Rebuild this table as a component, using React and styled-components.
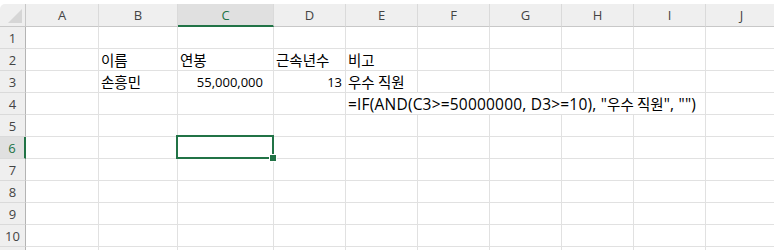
import React from "react";
import styled, { createGlobalStyle } from "styled-components";

const GlobalStyle = createGlobalStyle`
  html, body {
    margin: 0;
    padding: 0;
    background: #ffffff;
  }
  body {
    font-family: "Open Sans", "Noto Sans CJK KR", sans-serif;
  }
`;

const COLS = ["A", "B", "C", "D", "E", "F", "G", "H", "I", "J"];
const WIDTHS = [73, 79, 96, 72, 72, 72, 72, 72, 72, 72];
const ROWS = [1, 2, 3, 4, 5, 6, 7, 8, 9, 10, 11];

const green = "#217346";

const SELECTED = { col: "C", row: 6 };

// cell contents keyed by address (built at render time, after the styled parts exist)
const getData = () => ({
  B2: { text: <HangulText>이름</HangulText> },
  C2: { text: <HangulText>연봉</HangulText> },
  D2: { text: <HangulText>근속년수</HangulText> },
  E2: { text: <HangulText>비고</HangulText> },
  B3: { text: <HangulText>손흥민</HangulText> },
  C3: { text: "55,000,000", align: "right", pad: 10 },
  D3: { text: "13", align: "right" },
  E3: { text: <HangulText>우수 직원</HangulText> },
  E4: {
    span: 5,
    text: (
      <FormulaText>
        =IF(AND(C3&gt;=50000000, D3&gt;=10), "<HangulText>우수 직원</HangulText>", "")
      </FormulaText>
    ),
  },
});

const App = () => {
  const data = getData();
  return (
    <>
      <GlobalStyle />
      <Frame>
        <Sheet>
          <Corner>
            <CornerTriangle />
          </Corner>
          {COLS.map((c) => (
            <ColHeader key={c} $selected={c === SELECTED.col}>
              {c}
            </ColHeader>
          ))}
          {ROWS.map((r) => {
            const cells = [];
            let skip = 0;
            COLS.forEach((c) => {
              if (skip > 0) {
                skip -= 1;
                return;
              }
              const addr = c + r;
              const d = data[addr];
              const isSel = c === SELECTED.col && r === SELECTED.row;
              if (d && d.span) skip = d.span - 1;
              cells.push(
                <Cell
                  key={addr}
                  $span={d && d.span ? d.span : 1}
                  $align={d && d.align ? d.align : "left"}
                  $pad={d && d.pad ? d.pad : 3}
                  $active={isSel}
                >
                  {d ? d.text : null}
                  {isSel && (
                    <Selection>
                      <FillHandle />
                    </Selection>
                  )}
                </Cell>
              );
            });
            return (
              <React.Fragment key={r}>
                <RowHeader $selected={r === SELECTED.row}>{r}</RowHeader>
                {cells}
              </React.Fragment>
            );
          })}
        </Sheet>
      </Frame>
    </>
  );
};

const Frame = styled.div`
  width: 774px;
  height: 250px;
  overflow: hidden;
  padding-top: 4px;
  box-sizing: border-box;
  background: #ffffff;
`;

const Sheet = styled.div`
  display: grid;
  grid-template-columns: 26px ${WIDTHS.map((w) => w + "px").join(" ")};
  grid-template-rows: 23px repeat(${ROWS.length}, 22px);
  width: max-content;
`;

const Corner = styled.div`
  position: relative;
  background: #efefef;
  border-top-left-radius: 5px;
  border-right: 1px solid #c8c8c8;
  border-bottom: 1px solid #c8c8c8;
  box-sizing: border-box;
  display: flex;
  align-items: flex-end;
  justify-content: flex-end;
  padding: 0 3px 3px 0;
`;

const CornerTriangle = styled.div`
  width: 0;
  height: 0;
  border-left: 14px solid transparent;
  border-bottom: 14px solid #d6d6d6;
`;

const ColHeader = styled.div`
  box-sizing: border-box;
  background: ${(p) => (p.$selected ? "#e0e0e0" : "#efefef")};
  border-right: 1px solid #dadada;
  border-bottom: ${(p) => (p.$selected ? `2px solid ${green}` : "1px solid #c8c8c8")};
  color: ${(p) => (p.$selected ? green : "#444444")};
  font-size: 13px;
  display: flex;
  align-items: center;
  justify-content: center;
  padding-top: ${(p) => (p.$selected ? "1px" : "0")};
`;

const RowHeader = styled.div`
  box-sizing: border-box;
  background: ${(p) => (p.$selected ? "#e0e0e0" : "#efefef")};
  border-right: ${(p) => (p.$selected ? `2px solid ${green}` : "1px solid #b4b4b4")};
  border-bottom: 1px solid #dadada;
  color: ${(p) => (p.$selected ? green : "#444444")};
  font-size: 13px;
  display: flex;
  align-items: center;
  justify-content: center;
`;

const Cell = styled.div`
  position: relative;
  z-index: ${(p) => (p.$active ? 2 : "auto")};
  box-sizing: border-box;
  grid-column: span ${(p) => p.$span};
  border-right: 1px solid #e1e1e1;
  border-bottom: 1px solid #e1e1e1;
  color: #000000;
  font-size: 13px;
  display: flex;
  align-items: center;
  justify-content: ${(p) => (p.$align === "right" ? "flex-end" : "flex-start")};
  padding: ${(p) => (p.$align === "right" ? `0 ${p.$pad}px 0 0` : "0 0 0 2px")};
  white-space: pre;
`;

const HangulText = styled.span`
  font-family: "Noto Sans CJK KR", sans-serif;
  font-size: 14.5px;
  letter-spacing: 0;
`;

const FormulaText = styled.span`
  font-size: 15.5px;
  letter-spacing: 0.2px;
`;

const Selection = styled.div`
  position: absolute;
  left: -2px;
  top: -2px;
  width: 98px;
  height: 24px;
  box-sizing: border-box;
  border: 2px solid ${green};
  pointer-events: none;
`;

const FillHandle = styled.div`
  position: absolute;
  right: -4px;
  bottom: -4px;
  width: 6px;
  height: 6px;
  background: ${green};
  box-shadow: 0 0 0 1px #ffffff;
`;

export default App;
